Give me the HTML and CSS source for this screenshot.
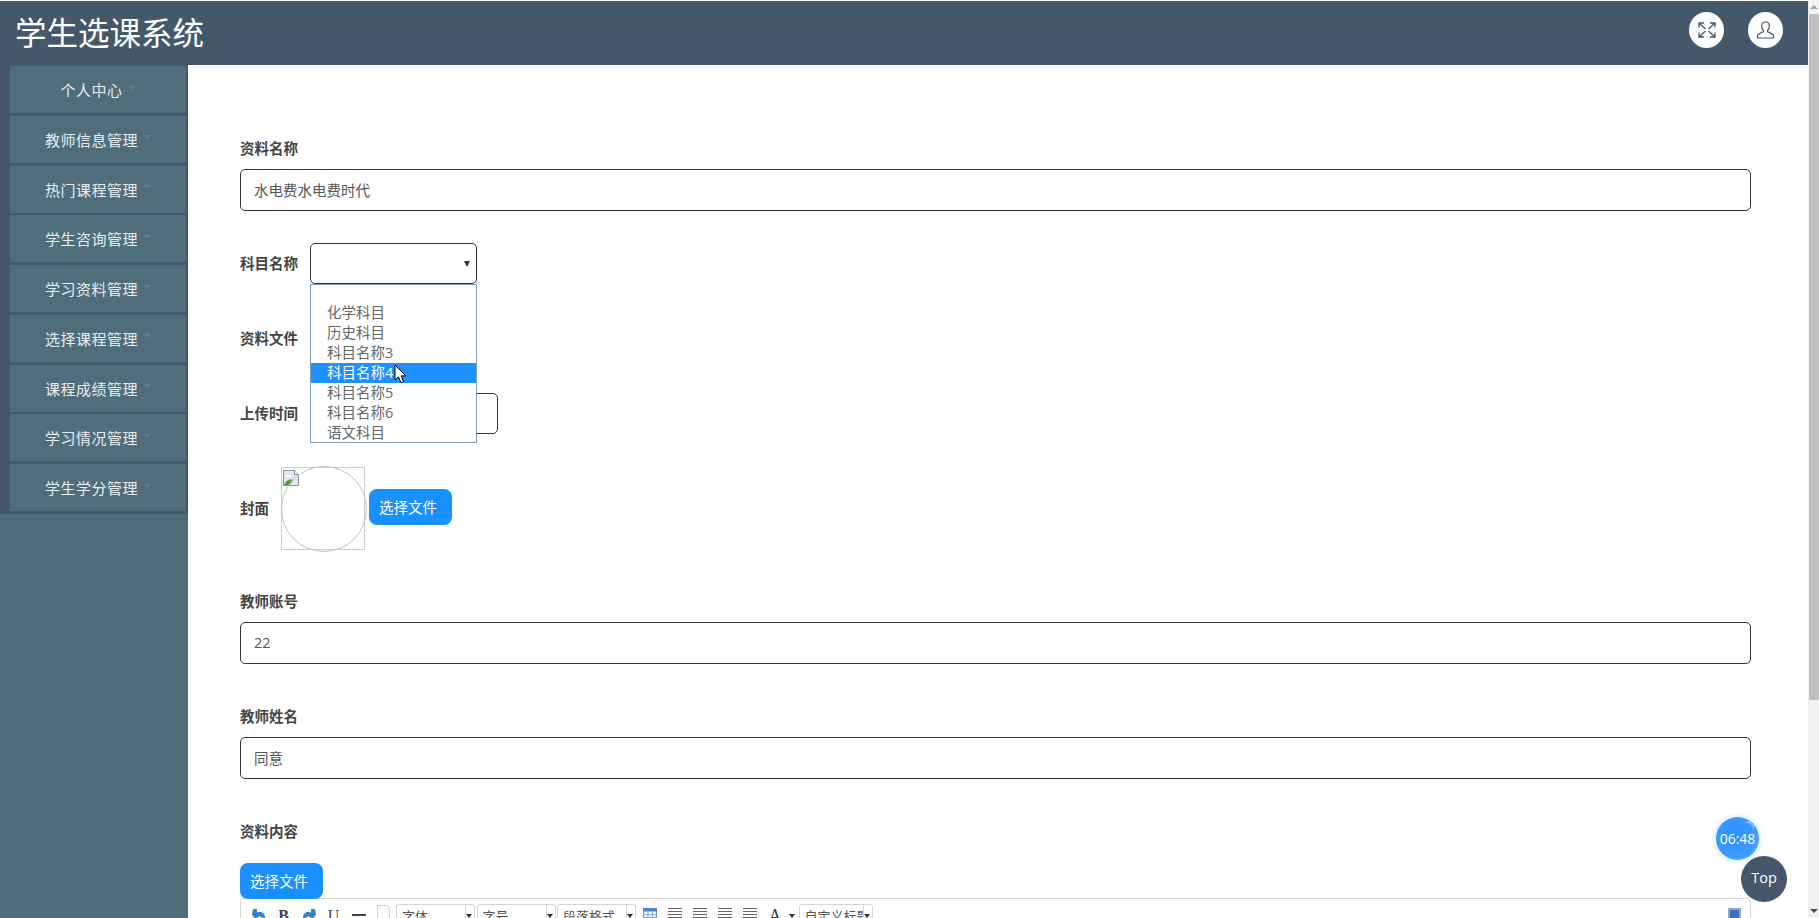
FILE: index.html
```html
<!DOCTYPE html>
<html lang="zh-CN">
<head>
    <meta charset="UTF-8">
    <title>学生选课系统</title>
    <link rel="stylesheet" href="styles.css">
</head>
<body>
    <div class="page">
        <div class="app">
            <header class="topbar">
                <h1>学生选课系统</h1>
                <div class="top-actions">
                    <button class="round-btn" type="button" aria-label="全屏">
                        <svg width="18" height="16" viewBox="0 0 18 16" fill="none" stroke="#44576a" stroke-width="1.300">
                            <path d="M1 5.500V1h5M1 1l6.500 6M12 1h5v4.500M17 1l-6.500 6M1 10.500V15h5M1 15l6.500-6M17 10.500V15h-5M17 15l-6.500-6"/>
                        </svg>
                    </button>
                    <button class="round-btn" type="button" aria-label="用户">
                        <svg width="19" height="18" viewBox="0 0 19 18" fill="none" stroke="#44576a" stroke-width="1.200">
                            <path d="M9.500 1C7 1 5.600 2.800 5.600 5c0 1.800.7 3.300 1.800 4.400v1.300c-1.800.9-5.200 1.700-5.900 3.800V17h16v-2.500c-.7-2.100-4.100-2.900-5.900-3.800V9.400c1.100-1.100 1.800-2.600 1.800-4.400 0-2.200-1.400-4-3.900-4z"/>
                        </svg>
                    </button>
                </div>
            </header>
            <div class="body-wrap">
                <nav class="sidebar">
                    <ul class="menu">
                        <li class="menu-item">个人中心<span class="caret"></span></li>
                        <li class="menu-item">教师信息管理<span class="caret"></span></li>
                        <li class="menu-item">热门课程管理<span class="caret"></span></li>
                        <li class="menu-item">学生咨询管理<span class="caret"></span></li>
                        <li class="menu-item">学习资料管理<span class="caret"></span></li>
                        <li class="menu-item">选择课程管理<span class="caret"></span></li>
                        <li class="menu-item">课程成绩管理<span class="caret"></span></li>
                        <li class="menu-item">学习情况管理<span class="caret"></span></li>
                        <li class="menu-item">学生学分管理<span class="caret"></span></li>
                    </ul>
                </nav>
                <main class="content">
                    <form class="edit-form">
                        <div class="field">
                            <label class="field-label">资料名称</label>
                            <input class="text-input" type="text" value="水电费水电费时代">
                        </div>
                        <div class="field-inline field-subject">
                            <label class="field-label">科目名称</label>
                            <div class="select-wrap">
                                <div class="select-box"><span class="select-arrow"></span></div>
                                <ul class="select-list">
                                    <li></li>
                                    <li>化学科目</li>
                                    <li>历史科目</li>
                                    <li>科目名称3</li>
                                    <li class="active">科目名称4
                                        <svg class="cursor" width="13" height="20" viewBox="0 0 13 20">
                                            <path d="M1 1v15l3.500-3.200 2.500 6 2.600-1.100-2.500-5.800H12z" fill="#fff" stroke="#000" stroke-width="1"/>
                                        </svg>
                                    </li>
                                    <li>科目名称5</li>
                                    <li>科目名称6</li>
                                    <li>语文科目</li>
                                </ul>
                            </div>
                        </div>
                        <div class="field-inline">
                            <label class="field-label">资料文件</label>
                        </div>
                        <div class="field-inline">
                            <label class="field-label">上传时间</label>
                            <input class="text-input date-input" type="text">
                        </div>
                        <div class="field-inline field-cover">
                            <label class="field-label">封面</label>
                            <div class="cover-box">
                                <svg class="broken-img" width="17" height="17" viewBox="0 0 17 17">
                                    <path d="M.5.500h11l4 4v11H.5z" fill="#dfe8f5" stroke="#8a8f96"/>
                                    <path d="M1 15c2-5 6-7 9-5l-3 5z" fill="#5c9e3a"/>
                                    <path d="M11.500.500v4h4" fill="#fff" stroke="#8a8f96"/>
                                    <path d="M3 5h5v2H3z" fill="#fff"/>
                                </svg>
                            </div>
                            <button class="upload-btn cover-btn" type="button">选择文件</button>
                        </div>
                        <div class="field field-teacher">
                            <label class="field-label">教师账号</label>
                            <input class="text-input" type="text" value="22">
                        </div>
                        <div class="field field-name">
                            <label class="field-label">教师姓名</label>
                            <input class="text-input" type="text" value="同意">
                        </div>
                        <div class="field field-name">
                            <label class="field-label label-content">资料内容</label>
                            <button class="upload-btn" type="button">选择文件</button>
                            <div class="editor">
                                <div class="toolbar">
                                    <span class="tool"><svg width="14" height="15" viewBox="0 0 14 15"><path d="M1 1h4v3.500c4-1.500 8 .5 8 5 0 3-2 5-5 5.500 2-1.500 3-3.500 2-5.500-1-1.500-3-1.500-5 0v3L0 7z" fill="#2f86c9"/></svg></span>
                                    <span class="tool tool-letter tool-b">B</span>
                                    <span class="tool"><svg width="14" height="15" viewBox="0 0 14 15"><path d="M13 1H9v3.500c-4-1.500-8 .5-8 5 0 3 2 5 5 5.500-2-1.500-3-3.500-2-5.500 1-1.500 3-1.500 5 0v3l5-5.500z" fill="#2f86c9"/></svg></span>
                                    <span class="tool tool-letter tool-u">U</span>
                                    <span class="tool"><span class="icon-line"></span></span>
                                    <span class="tool tool-top"><span class="icon-page"></span></span>
                                    <span class="combo"><span class="combo-text">字体</span><span class="combo-arrow"></span></span>
                                    <span class="combo"><span class="combo-text">字号</span><span class="combo-arrow"></span></span>
                                    <span class="combo"><span class="combo-text">段落格式</span><span class="combo-arrow"></span></span>
                                    <span class="tool"><svg width="14" height="13" viewBox="0 0 14 13"><path d="M.5.500h13v12H.5z" fill="#eaf2fb" stroke="#5a8fc9"/><path d="M0 0h14v3.500H0z" fill="#4a82c4"/><path d="M5 3v9M9.500 3v9M0 6.500h14M0 9.500h14" stroke="#8db3dd"/></svg></span>
                                    <span class="tool"><span class="icon-align"></span></span>
                                    <span class="tool"><span class="icon-align"></span></span>
                                    <span class="tool"><span class="icon-align"></span></span>
                                    <span class="tool"><span class="icon-align"></span></span>
                                    <span class="tool tool-letter tool-a">A</span>
                                    <span class="small-arrow"></span>
                                    <span class="combo combo-title"><span class="combo-text">自定义标题</span><span class="combo-arrow"></span></span>
                                    <span class="tool-end"></span>
                                </div>
                            </div>
                        </div>
                    </form>
                </main>
            </div>
            <div class="timer">06:48</div>
            <div class="to-top">Top</div>
        </div>
        <div class="scrollbar">
            <span class="scroll-up"></span>
            <span class="scroll-thumb"></span>
            <span class="scroll-down"></span>
        </div>
    </div>
</body>
</html>
```

FILE: styles.css
```css
* {
    box-sizing: border-box;
}
html, body {
    margin: 0;
    padding: 0;
    height: 100%;
    overflow: hidden;
}
body {
    font-family: "Open Sans", "Noto Sans CJK SC", sans-serif;
    font-size: 14.5px;
    color: #555;
    background-color: #fff;
}
.page {
    display: flex;
    height: 918px;
}
.app {
    flex: 1;
    position: relative;
    display: flex;
    flex-direction: column;
    min-width: 0;
}
.topbar {
    height: 64px;
    margin-top: 1px;
    flex-shrink: 0;
    display: flex;
    align-items: center;
    justify-content: space-between;
    background-color: #45576a;
    padding: 0 25px 4px 15px;
}
.topbar h1 {
    margin: 0;
    font-size: 31.5px;
    font-weight: 400;
    color: #fff;
}
.top-actions {
    display: flex;
    gap: 24px;
    margin-bottom: 2px;
}
.round-btn {
    width: 35px;
    height: 36px;
    border-radius: 50%;
    border: none;
    padding: 0;
    background-color: #fff;
    display: flex;
    align-items: center;
    justify-content: center;
}
.body-wrap {
    flex: 1;
    display: flex;
    min-height: 0;
}
.sidebar {
    width: 188px;
    flex-shrink: 0;
    background-color: #4f6a79;
}
.menu {
    list-style: none;
    margin: 0;
    padding: 1px 2px 3px 10px;
    background-color: #45576a;
    display: flex;
    flex-direction: column;
    gap: 2.750px;
}
.menu-item {
    height: 47px;
    display: flex;
    align-items: center;
    justify-content: center;
    background-color: #506d7c;
    color: #e8eef0;
    font-size: 15px;
    letter-spacing: .5px;
}
.caret {
    width: 0;
    height: 0;
    margin: 0 0 4px 5px;
    border-left: 4px solid transparent;
    border-right: 4px solid transparent;
    border-top: 4px solid #64798a;
}
.content {
    flex: 1;
    min-width: 0;
    background-color: #fff;
    padding: 74px 57px 0 52px;
    overflow: hidden;
}
.field-label {
    font-weight: 700;
    color: #444;
    font-size: 14.5px;
    line-height: 20px;
}
.field .field-label {
    display: block;
    margin-bottom: 10px;
}
.field-name {
    margin-top: 43px;
}
.field-teacher {
    margin-top: 42px;
}
.text-input {
    display: block;
    width: 100%;
    height: 42px;
    padding: 0 13px 2px;
    border: 1px solid #333;
    border-radius: 5px;
    color: #555;
    font: inherit;
    background-color: #fff;
}
.field-inline {
    display: flex;
    align-items: center;
    margin-top: 34px;
    height: 41px;
}
.field-subject {
    margin-top: 32px;
}
.field-inline .field-label {
    margin-right: 12px;
}
.date-input {
    width: 188px;
    height: 41px;
}
.select-wrap {
    position: relative;
    width: 167px;
    z-index: 2;
}
.select-box {
    height: 41px;
    border: 1px solid #333;
    border-radius: 5px;
    background-color: #fff;
    position: relative;
}
.select-arrow {
    position: absolute;
    right: 6px;
    top: 17px;
    border-left: 3.500px solid transparent;
    border-right: 3.500px solid transparent;
    border-top: 6px solid #333;
}
.select-list {
    position: absolute;
    left: 0;
    top: 41px;
    width: 167px;
    margin: 0;
    padding: 0;
    list-style: none;
    border: 1px solid #7f9db9;
    background-color: #fff;
    color: #666;
    height: 159px;
}
.select-list li {
    position: relative;
    height: 20px;
    line-height: 20px;
    padding-left: 16px;
}
.select-list li:first-child {
    height: 18px;
}
.select-list .active {
    background-color: #1e90ff;
    color: #fff;
}
.cursor {
    position: absolute;
    left: 83px;
    top: 1px;
}
.upload-btn {
    height: 36px;
    width: 83px;
    border: none;
    border-radius: 8px;
    background-color: #1890ff;
    color: #fff;
    font: inherit;
    padding: 0 0 2px 10px;
    text-align: left;
}
.field-cover {
    height: 83px;
    margin-top: 33px;
}
.cover-btn {
    margin-bottom: 3px;
}
.cover-box {
    position: relative;
    width: 84px;
    height: 83px;
    margin-right: 4px;
    border: 1px solid #ccc;
}
.cover-box::after {
    content: "";
    position: absolute;
    left: -1px;
    top: -2px;
    width: 84px;
    height: 84px;
    border: 1px solid #c4c4c4;
    border-radius: 50%;
}
.broken-img {
    position: absolute;
    left: 1px;
    top: 2px;
}
.label-content {
    margin-bottom: 21px !important;
}
.upload-btn + .editor {
    margin-top: -1px;
}
.editor {
    height: 60px;
    border: 1px solid #d4d4d4;
    border-radius: 4px 4px 0 0;
    background-color: #fff;
    overflow: hidden;
}
.toolbar {
    display: flex;
    align-items: flex-start;
    height: 30px;
    margin-top: 5px;
    padding-left: 5px;
    color: #444;
}
.tool {
    flex-shrink: 0;
    width: 25px;
    height: 20px;
    margin-top: 4px;
    display: flex;
    justify-content: center;
}
.tool-top {
    margin-top: 1px;
}
.tool-letter {
    font-family: "Liberation Serif", serif;
    font-size: 16px;
    line-height: 16px;
    color: #444;
}
.tool-b {
    font-weight: 700;
}
.tool-a {
    font-size: 18px;
}
.icon-line {
    display: block;
    width: 14px;
    height: 2px;
    margin-top: 6px;
    background-color: #444;
}
.icon-page {
    display: block;
    width: 13px;
    height: 18px;
    border: 1px solid #cfcfcf;
    border-top-right-radius: 4px;
    background-color: #fafafa;
}
.icon-align {
    display: block;
    width: 14px;
    height: 13px;
    background: repeating-linear-gradient(to bottom, #666 0, #666 1px, #fff 1px, #fff 3px);
}
.combo {
    display: flex;
    flex-shrink: 0;
    width: 79px;
    height: 26px;
    margin-right: 1.500px;
    border: 1px solid #d4d4d4;
    border-radius: 3px 3px 0 0;
    font-size: 13px;
    color: #555;
}
.combo-text {
    flex: 1;
    padding-left: 5px;
    line-height: 22px;
    white-space: nowrap;
    overflow: hidden;
}
.combo-arrow {
    position: relative;
    width: 9px;
    border-left: 1px solid #d4d4d4;
}
.combo-arrow::after, .small-arrow {
    content: "";
    display: block;
    border-left: 3.500px solid transparent;
    border-right: 3.500px solid transparent;
    border-top: 4px solid #333;
}
.combo-arrow::after {
    position: absolute;
    left: 0;
    top: 9px;
}
.small-arrow {
    margin: 10px 3.500px 0 1.500px;
    flex-shrink: 0;
}
.combo-title {
    width: 74px;
}
.tool-end {
    margin-left: auto;
    margin-right: 9px;
    margin-top: 4px;
    width: 13px;
    height: 13px;
    background-color: #3f6fb5;
    border: 2px solid #8da9cf;
}
.timer {
    position: absolute;
    left: 1716px;
    top: 817px;
    width: 43px;
    height: 43px;
    border-radius: 50%;
    background: radial-gradient(circle at 42% 42%, #2f8fff 0, #3a9bff 62%, #7cc3ff 100%);
    box-shadow: 0 0 4px 2px #dcecff;
    color: #fff;
    font-size: 14px;
    line-height: 43px;
    text-align: center;
}
.timer::before {
    content: "";
    position: absolute;
    right: 5px;
    top: 5px;
    width: 12px;
    height: 10px;
    border-top: 1px solid #cfe7ff;
    border-radius: 50%;
    transform: rotate(35deg);
}
.to-top {
    position: absolute;
    left: 1741px;
    top: 856px;
    width: 46px;
    height: 46px;
    border-radius: 50%;
    background-color: #45576a;
    color: #fff;
    font-size: 14.5px;
    line-height: 44px;
    text-align: center;
}
.scrollbar {
    width: 11px;
    flex-shrink: 0;
    display: flex;
    flex-direction: column;
    background-color: #f1f1f1;
}
.scroll-up, .scroll-down {
    width: 0;
    height: 0;
    margin: 5px auto;
    border-left: 4px solid transparent;
    border-right: 4px solid transparent;
}
.scroll-up {
    border-bottom: 4px solid #a3a3a3;
}
.scroll-down {
    margin-top: auto;
    border-top: 4px solid #505050;
}
.scroll-thumb {
    height: 686px;
    margin-left: 1px;
    background-color: #c1c1c1;
}
```
